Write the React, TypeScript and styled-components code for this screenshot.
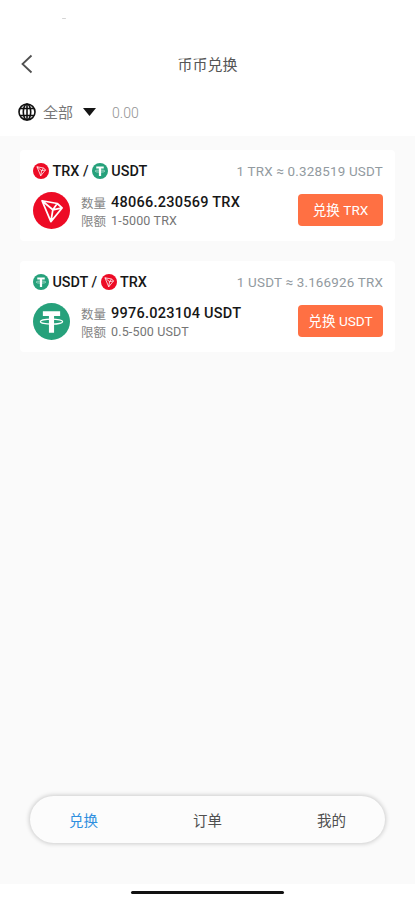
import React from "react";
import styled, { createGlobalStyle } from "styled-components";

const GlobalStyle = createGlobalStyle`
  * { box-sizing: border-box; }
  body { margin: 0; background: #fff; }
  button { font: inherit; border: 0; padding: 0; background: none; }
`;

const Screen = styled.div`
  width: 415px;
  height: 900px;
  display: flex;
  flex-direction: column;
  overflow: hidden;
  background: #fff;
  font-family: Roboto, "Noto Sans CJK SC", sans-serif;
`;

const StatusBar = styled.div`
  height: 44px;
  padding: 18px 0 0 62px;
`;

const StatusDot = styled.div`
  width: 4px;
  height: 1px;
  border-radius: 1px;
  background: #d4d4d4;
`;

const Header = styled.header`
  height: 40px;
  padding: 0 20px;
  display: grid;
  grid-template-columns: 40px 1fr 40px;
  align-items: center;
`;

const BackButton = styled.button`
  display: flex;
  color: #505050;
`;

const Title = styled.h1`
  margin: 0;
  padding-top: 2px;
  text-align: center;
  font-size: 15px;
  line-height: 22px;
  font-weight: 400;
  color: #555;
`;

const FilterBar = styled.div`
  height: 52px;
  padding: 4px 18px 0;
  display: flex;
  align-items: center;
`;

const FilterLabel = styled.span`
  margin: 0 10px 0 7px;
  padding-top: 1px;
  font-size: 15px;
  line-height: 22px;
  color: #777;
`;

const Balance = styled.span`
  margin-left: 16px;
  padding-top: 2px;
  font-size: 14px;
  line-height: 22px;
  font-weight: 300;
  color: #929292;
`;

const Content = styled.main`
  flex: 1;
  padding: 14px 20px 0;
  display: flex;
  flex-direction: column;
  gap: 20px;
  background: #fafafa;
`;

const Card = styled.article`
  height: 91px;
  padding: 12px 12px 0 13px;
  border-radius: 4px;
  background: #fff;
`;

const PairRow = styled.div`
  height: 18px;
  display: flex;
  align-items: center;
  justify-content: space-between;
`;

const Pair = styled.div`
  display: flex;
  align-items: center;
  gap: 3.4px;
  font-size: 14.4px;
  font-weight: 500;
  line-height: 18px;
  color: #171717;
`;

const PairName = styled.span`
  padding-top: 2px;
`;

const Rate = styled.div`
  padding-top: 2px;
  font-size: 13.4px;
  line-height: 18px;
  letter-spacing: 0.2px;
  color: #929aa0;
`;

const OfferRow = styled.div`
  display: flex;
  align-items: center;
  height: 38px;
  margin-top: 11px;
`;

const Details = styled.div`
  flex: 1;
  margin-left: 11px;
  padding-top: 2px;
`;

const DetailLine = styled.div<{ $height: number }>`
  display: flex;
  align-items: center;
  height: ${(p) => p.$height}px;
  white-space: nowrap;
`;

const DetailLabel = styled.span`
  width: 30px;
  font-size: 12.5px;
  color: #858585;
`;

const Amount = styled.span`
  font-size: 14.5px;
  font-weight: 500;
  letter-spacing: 0.25px;
  color: #171717;
`;

const Limit = styled.span`
  font-size: 12.5px;
  letter-spacing: 0.16px;
  color: #757575;
`;

const SwapButton = styled.button`
  width: 85px;
  height: 32px;
  border-radius: 4px;
  background: #ff7043;
  color: #fff;
  font-size: 13.6px;
  line-height: 32px;
  text-align: center;
`;

const Footer = styled.footer`
  height: 88px;
  padding: 0 30px;
  background: #fafafa;
`;

const TabBar = styled.nav`
  height: 47px;
  display: flex;
  justify-content: center;
  border-radius: 24px;
  background: #fcfcfc;
  box-shadow: 0 0 4px 1px rgba(0, 0, 0, 0.18);
`;

const Tab = styled.button<{ $active?: boolean }>`
  flex: 0 0 124px;
  font-size: 14.5px;
  color: ${(p) => (p.$active ? "#2f8fdf" : "#505050")};
`;

const HomeArea = styled.div`
  height: 16px;
  padding-top: 7px;
  display: flex;
  justify-content: center;
`;

const HomeIndicator = styled.div`
  width: 153px;
  height: 3px;
  border-radius: 2px;
  background: #111;
`;

type Coin = "TRX" | "USDT";

function CoinIcon({ coin, size }: { coin: Coin; size: number }) {
  return (
    <svg width={size} height={size} viewBox="0 0 36 36" fill="none" aria-label={coin}>
      <circle cx="18" cy="18" r="18" fill={coin === "TRX" ? "#ed0b25" : "#26a17b"} />
      {coin === "TRX" ? (
        <path
          d="M8.8 8.5 23.6 11.2 28.3 15.5 17.4 28.8 8.8 8.5Zm0 0 10.5 8.8 9-1.8m-4.7-4.3-4.3 6.1-1.9 11.5"
          stroke="#fff"
          strokeWidth="1.7"
          strokeLinejoin="round"
        />
      ) : (
        <>
          <path d="M9.6 8h16.8v4.6h-5.9V29h-5V12.6H9.6z" fill="#fff" />
          <ellipse cx="18" cy="18.2" rx="10.8" ry="2.4" stroke="#fff" strokeWidth="1.2" />
        </>
      )}
    </svg>
  );
}

interface Offer {
  from: Coin;
  to: Coin;
  rate: string;
  amount: string;
  limit: string;
}

const offers: Offer[] = [
  { from: "TRX", to: "USDT", rate: "0.328519", amount: "48066.230569", limit: "1-5000" },
  { from: "USDT", to: "TRX", rate: "3.166926", amount: "9976.023104", limit: "0.5-500" },
];

function OfferCard({ offer }: { offer: Offer }) {
  return (
    <Card>
      <PairRow>
        <Pair>
          <CoinIcon coin={offer.from} size={16} />
          <PairName>{offer.from} /</PairName>
          <CoinIcon coin={offer.to} size={16} />
          <PairName>{offer.to}</PairName>
        </Pair>
        <Rate>
          1 {offer.from} ≈ {offer.rate} {offer.to}
        </Rate>
      </PairRow>
      <OfferRow>
        <CoinIcon coin={offer.from} size={37} />
        <Details>
          <DetailLine $height={19}>
            <DetailLabel>数量</DetailLabel>
            <Amount>{offer.amount} {offer.from}</Amount>
          </DetailLine>
          <DetailLine $height={17}>
            <DetailLabel>限额</DetailLabel>
            <Limit>{offer.limit} {offer.from}</Limit>
          </DetailLine>
        </Details>
        <SwapButton>兑换 {offer.from}</SwapButton>
      </OfferRow>
    </Card>
  );
}

export default function App() {
  return (
    <>
      <GlobalStyle />
      <Screen>
        <StatusBar><StatusDot /></StatusBar>
        <Header>
          <BackButton aria-label="返回">
            <svg width="13" height="20" viewBox="0 0 13 20" fill="none">
              <path d="M11.5 1.5 2.5 10l9 8.5" stroke="currentColor" strokeWidth="1.8" />
            </svg>
          </BackButton>
          <Title>币币兑换</Title>
        </Header>
        <FilterBar>
          <svg width="18" height="18" viewBox="0 0 18 18" fill="none" stroke="#111" strokeWidth="1.6">
            <circle cx="9" cy="9" r="8" />
            <ellipse cx="9" cy="9" rx="3.7" ry="8" />
            <path d="M9 1v16M2 5.5h14M2 12.5h14" />
          </svg>
          <FilterLabel>全部</FilterLabel>
          <svg width="13" height="8" viewBox="0 0 13 8">
            <path d="M0 0h13L6.5 8z" fill="#151515" />
          </svg>
          <Balance>0.00</Balance>
        </FilterBar>
        <Content>
          {offers.map((offer) => <OfferCard key={offer.from} offer={offer} />)}
        </Content>
        <Footer>
          <TabBar>
            <Tab $active>兑换</Tab>
            <Tab>订单</Tab>
            <Tab>我的</Tab>
          </TabBar>
        </Footer>
        <HomeArea><HomeIndicator /></HomeArea>
      </Screen>
    </>
  );
}
